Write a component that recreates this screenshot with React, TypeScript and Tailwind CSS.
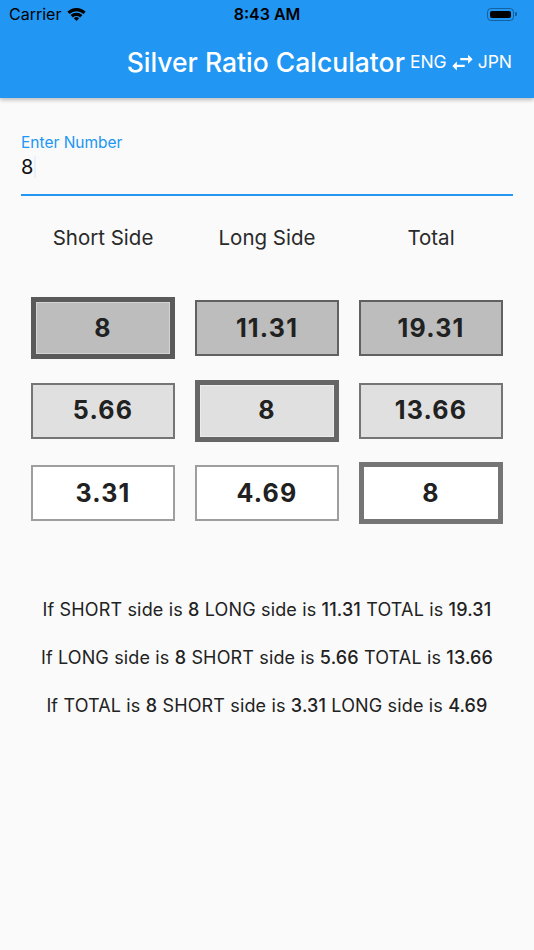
import React from "react";

type Cell = { v: string; thick: boolean };

const rows: { cells: Cell[]; bg: string; thin: string; thickB: string }[] = [
  {
    cells: [
      { v: "8", thick: true },
      { v: "11.31", thick: false },
      { v: "19.31", thick: false },
    ],
    bg: "bg-[#bdbdbd]",
    thin: "border-[#616161]",
    thickB: "border-[#5a5a5a]",
  },
  {
    cells: [
      { v: "5.66", thick: false },
      { v: "8", thick: true },
      { v: "13.66", thick: false },
    ],
    bg: "bg-[#e0e0e0]",
    thin: "border-[#757575]",
    thickB: "border-[#666666]",
  },
  {
    cells: [
      { v: "3.31", thick: false },
      { v: "4.69", thick: false },
      { v: "8", thick: true },
    ],
    bg: "bg-white",
    thin: "border-[#9e9e9e]",
    thickB: "border-[#757575]",
  },
];

function Wifi() {
  return (
    <svg width="19" height="13" viewBox="0 0 20 14" fill="#000">
      <path d="M0.1 4.1 A14 14 0 0 1 19.9 4.1 L17.42 6.58 A10.5 10.5 0 0 0 2.58 6.58 Z" />
      <path d="M3.64 7.64 A9 9 0 0 1 16.36 7.64 L13.89 10.11 A5.5 5.5 0 0 0 6.11 10.11 Z" />
      <path d="M10 14 L7.17 11.17 A4 4 0 0 1 12.83 11.17 Z" />
    </svg>
  );
}

function Swap() {
  return (
    <svg width="27" height="27" viewBox="0 0 24 24" fill="#fff" className="shrink-0">
      <path d="M6.99 11L3 15l3.99 4v-3H14v-2H6.99v-3zM21 9l-4-4v3h-7v2h7v3l4-4z" />
    </svg>
  );
}

function Sentence({ parts }: { parts: [string, boolean][] }) {
  return (
    <div className="text-center text-[18px] leading-[24px] tracking-[0.15px] text-[#222222]">
      {parts.map(([t, b], i) => (
        <span key={i} className={b ? "font-medium" : "font-normal"}>
          {t}
        </span>
      ))}
    </div>
  );
}

export default function App() {
  return (
    <div className="w-[534px] h-[950px] bg-[#fafafa] font-['Inter',sans-serif] overflow-hidden">
      <div className="h-[98px] bg-[#2196f3] shadow-[0_2px_4px_rgba(0,0,0,0.25)] relative z-10">
        <div className="h-[28px] relative flex items-center px-[9px]">
          <div className="flex items-center gap-[6px]">
            <span className="text-[16px] text-black leading-none">Carrier</span>
            <Wifi />
          </div>
          <div className="absolute left-0 right-0 top-0 h-[28px] flex items-center justify-center pointer-events-none">
            <span className="text-[16px] font-semibold text-black leading-none">8:43 AM</span>
          </div>
          <div className="ml-auto flex items-center mr-[8px]">
            <div className="w-[27px] h-[13px] rounded-[4px] border border-[rgba(0,0,0,0.35)] p-[2px]">
              <div className="w-full h-full bg-black rounded-[2px]" />
            </div>
            <div className="w-[2px] h-[4px] bg-[rgba(0,0,0,0.35)] rounded-r-[1px] ml-[1px]" />
          </div>
        </div>
        <div className="h-[70px] flex items-center justify-end pr-[22px] pb-[2px]">
          <span className="text-[26.5px] font-medium text-white leading-none tracking-[0px] whitespace-nowrap">
            Silver Ratio Calculator
          </span>
          <div className="flex items-center ml-[5px] text-white text-[17.5px] leading-none shrink-0">
            <span>ENG</span>
            <span className="mx-[2px] flex items-center shrink-0">
              <Swap />
            </span>
            <span>JPN</span>
          </div>
        </div>
      </div>

      <div className="px-[21px]">
        <div className="pt-[36px] text-[15.5px] leading-[18px] text-[#2196f3]">Enter Number</div>
        <div className="mt-[3px] text-[20px] leading-[24px] text-[#111] flex items-center">
          <span>8</span>
          <span className="ml-[1px] w-[2px] h-[22px] bg-[#e8f0fb]" />
        </div>
        <div className="mt-[15px] h-[2px] bg-[#2196f3]" />

        <div className="ml-[10px] mt-[30px] grid grid-cols-[144px_144px_144px] gap-x-[20px] text-[20.5px] leading-[24px] text-[#2a2a2a] text-center">
          <div>Short Side</div>
          <div>Long Side</div>
          <div>Total</div>
        </div>

        <div className="ml-[10px] mt-[47px] flex flex-col gap-[20.5px]">
          {rows.map((r, ri) => (
            <div key={ri} className="h-[62px] grid grid-cols-[144px_144px_144px] gap-x-[20px] items-center">
              {r.cells.map((c, ci) => (
                <div
                  key={ci}
                  className={
                    c.thick
                      ? `h-[62px] border-[5px] ${r.thickB} ${r.bg} flex items-center justify-center shadow-[inset_0_0_0_1px_rgba(255,255,255,0.35)]`
                      : `h-[56px] border-2 ${r.thin} ${r.bg} flex items-center justify-center`
                  }
                >
                  <span className="text-[25px] font-bold text-[#212121] leading-none tracking-[1.2px]">
                    {c.v}
                  </span>
                </div>
              ))}
            </div>
          ))}
        </div>

        <div className="mt-[74px] flex flex-col gap-[24px]">
          <Sentence
            parts={[
              ["If SHORT side is ", false],
              ["8", true],
              [" LONG side is ", false],
              ["11.31", true],
              [" TOTAL is ", false],
              ["19.31", true],
            ]}
          />
          <Sentence
            parts={[
              ["If LONG side is ", false],
              ["8", true],
              [" SHORT side is ", false],
              ["5.66", true],
              [" TOTAL is ", false],
              ["13.66", true],
            ]}
          />
          <Sentence
            parts={[
              ["If TOTAL is ", false],
              ["8", true],
              [" SHORT side is ", false],
              ["3.31", true],
              [" LONG side is ", false],
              ["4.69", true],
            ]}
          />
        </div>
      </div>
    </div>
  );
}
